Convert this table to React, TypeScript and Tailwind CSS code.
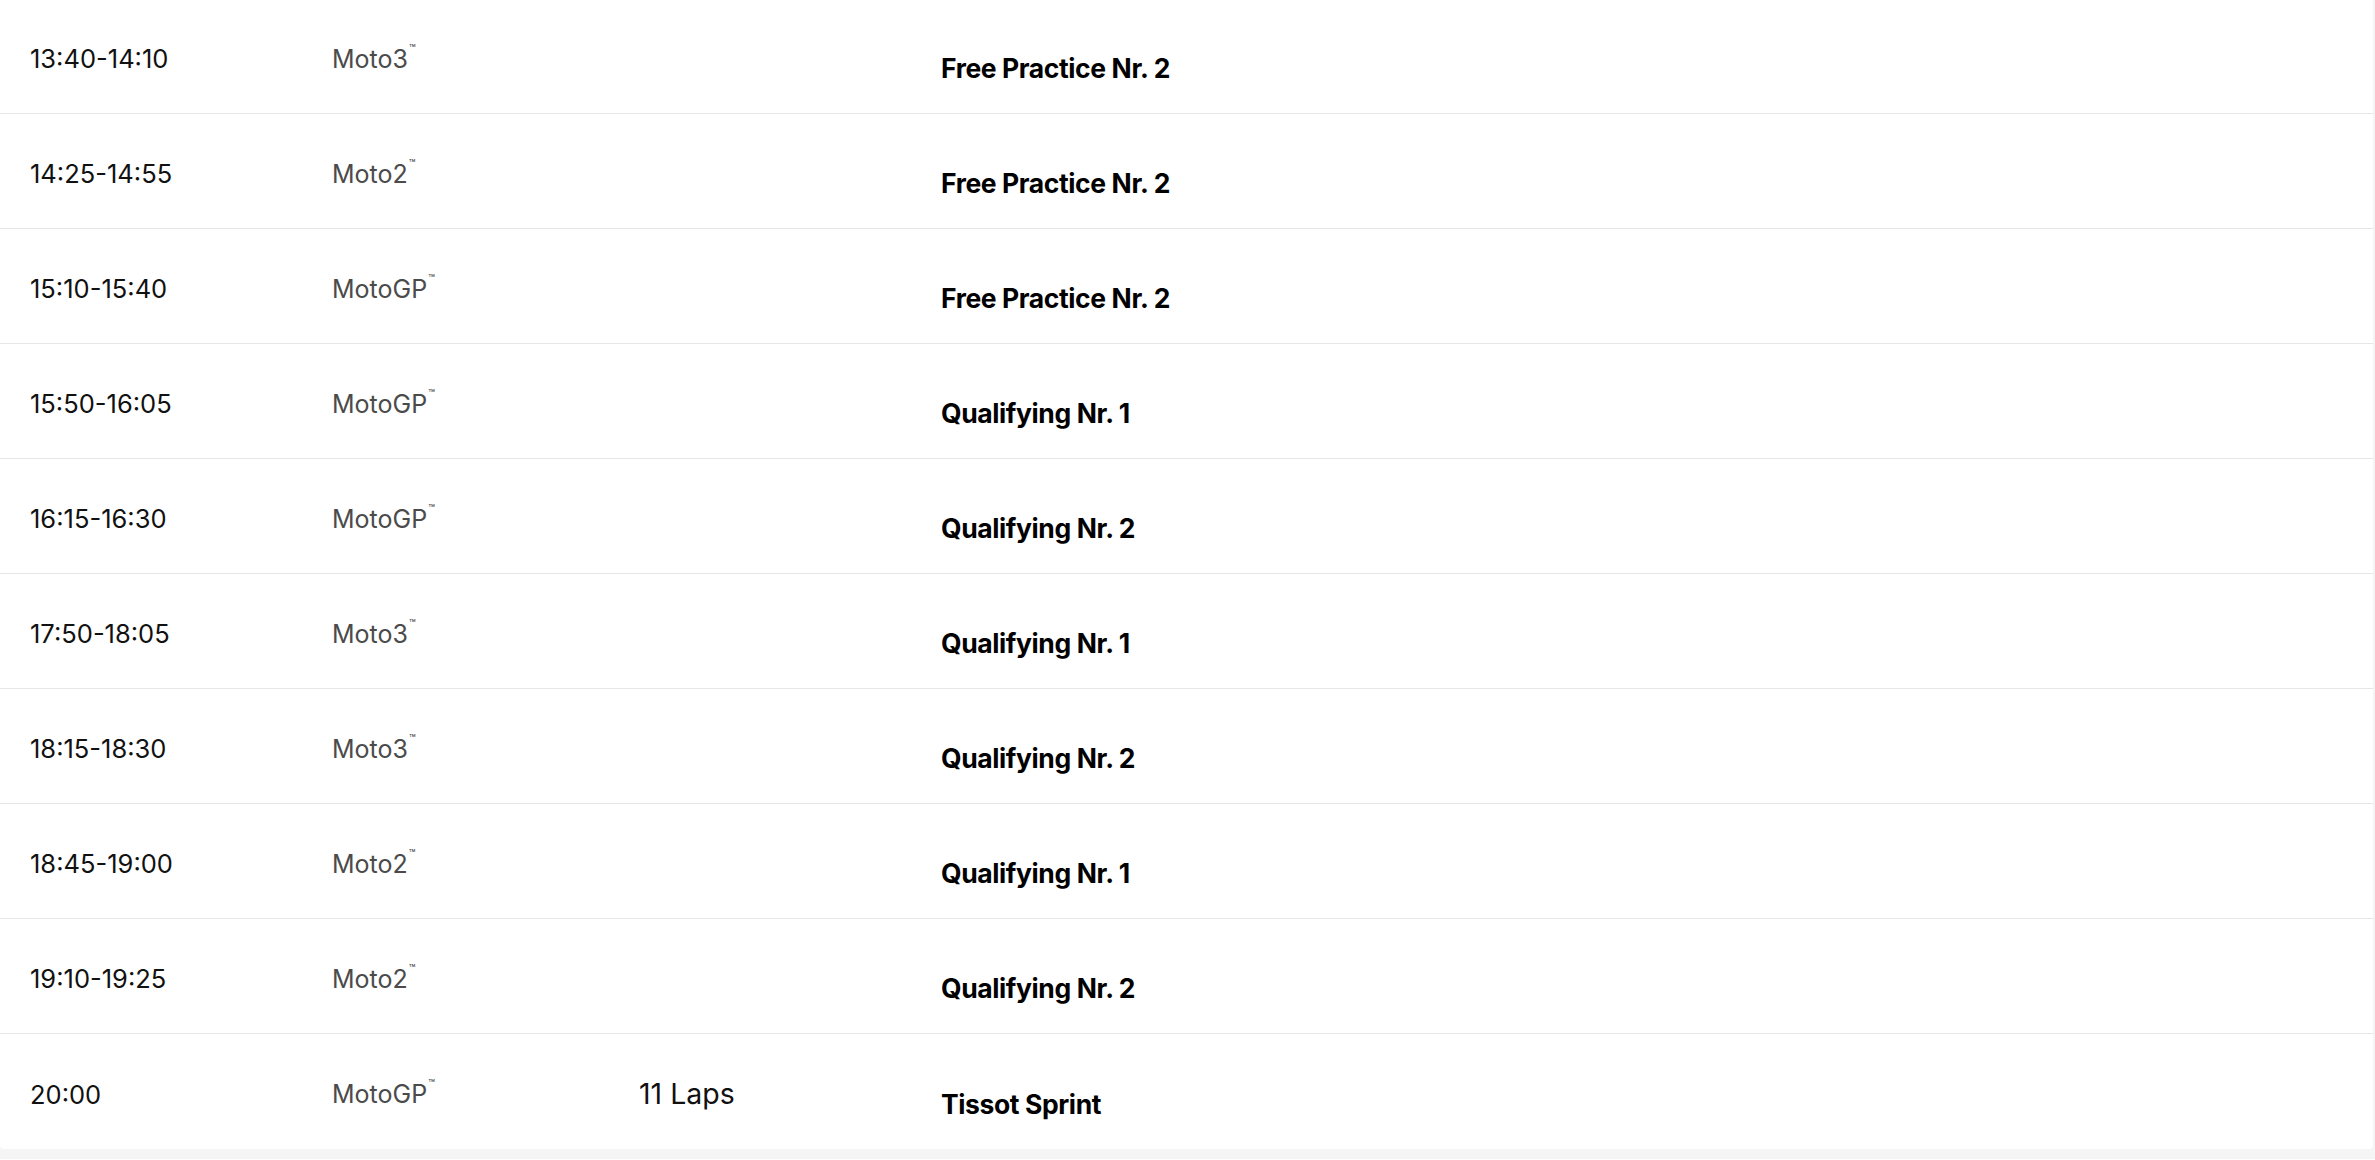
import React from 'react'

type Session = {
  time: string
  cls: string
  laps?: string
  title: string
}

const SESSIONS: Session[] = [
  { time: '13:40-14:10', cls: 'Moto3', title: 'Free Practice Nr. 2' },
  { time: '14:25-14:55', cls: 'Moto2', title: 'Free Practice Nr. 2' },
  { time: '15:10-15:40', cls: 'MotoGP', title: 'Free Practice Nr. 2' },
  { time: '15:50-16:05', cls: 'MotoGP', title: 'Qualifying Nr. 1' },
  { time: '16:15-16:30', cls: 'MotoGP', title: 'Qualifying Nr. 2' },
  { time: '17:50-18:05', cls: 'Moto3', title: 'Qualifying Nr. 1' },
  { time: '18:15-18:30', cls: 'Moto3', title: 'Qualifying Nr. 2' },
  { time: '18:45-19:00', cls: 'Moto2', title: 'Qualifying Nr. 1' },
  { time: '19:10-19:25', cls: 'Moto2', title: 'Qualifying Nr. 2' },
  { time: '20:00', cls: 'MotoGP', laps: '11 Laps', title: 'Tissot Sprint' },
]

function Row({ s, last }: { s: Session; last: boolean }) {
  return (
    <div
      className={`flex items-center h-[115px] pt-[6px] pl-[30px] ${
        last ? '' : 'border-b border-[#e6e6e6]'
      }`}
    >
      {/* zeit */}
      <div className="w-[302px] shrink-0 text-[25.5px] text-[#111] leading-none">
        {s.time}
      </div>
      {/* klasse */}
      <div className="w-[307px] shrink-0 text-[25px] text-[#4b4b4b] leading-none">
        {s.cls}
        <sup className="text-[11px] align-top relative top-[1px] ml-[1px]">™</sup>
      </div>
      {/* runden */}
      <div className="w-[302px] shrink-0 text-[28.5px] text-[#111] leading-none">
        {s.laps}
      </div>
      {/* session */}
      <div className="mt-[19px] text-[26.5px] font-bold tracking-[-0.015em] text-black leading-none">
        {s.title}
      </div>
    </div>
  )
}

export default function App() {
  return (
    <div
      className="min-h-screen bg-[#f5f5f5]"
      style={{ fontFamily: 'Inter, "Noto Sans", sans-serif' }}
    >
      <div className="bg-white rounded-b-[4px] mr-[2px] -mt-px overflow-hidden">
        {SESSIONS.map((s, i) => (
          <Row key={i} s={s} last={i === SESSIONS.length - 1} />
        ))}
      </div>
    </div>
  )
}
